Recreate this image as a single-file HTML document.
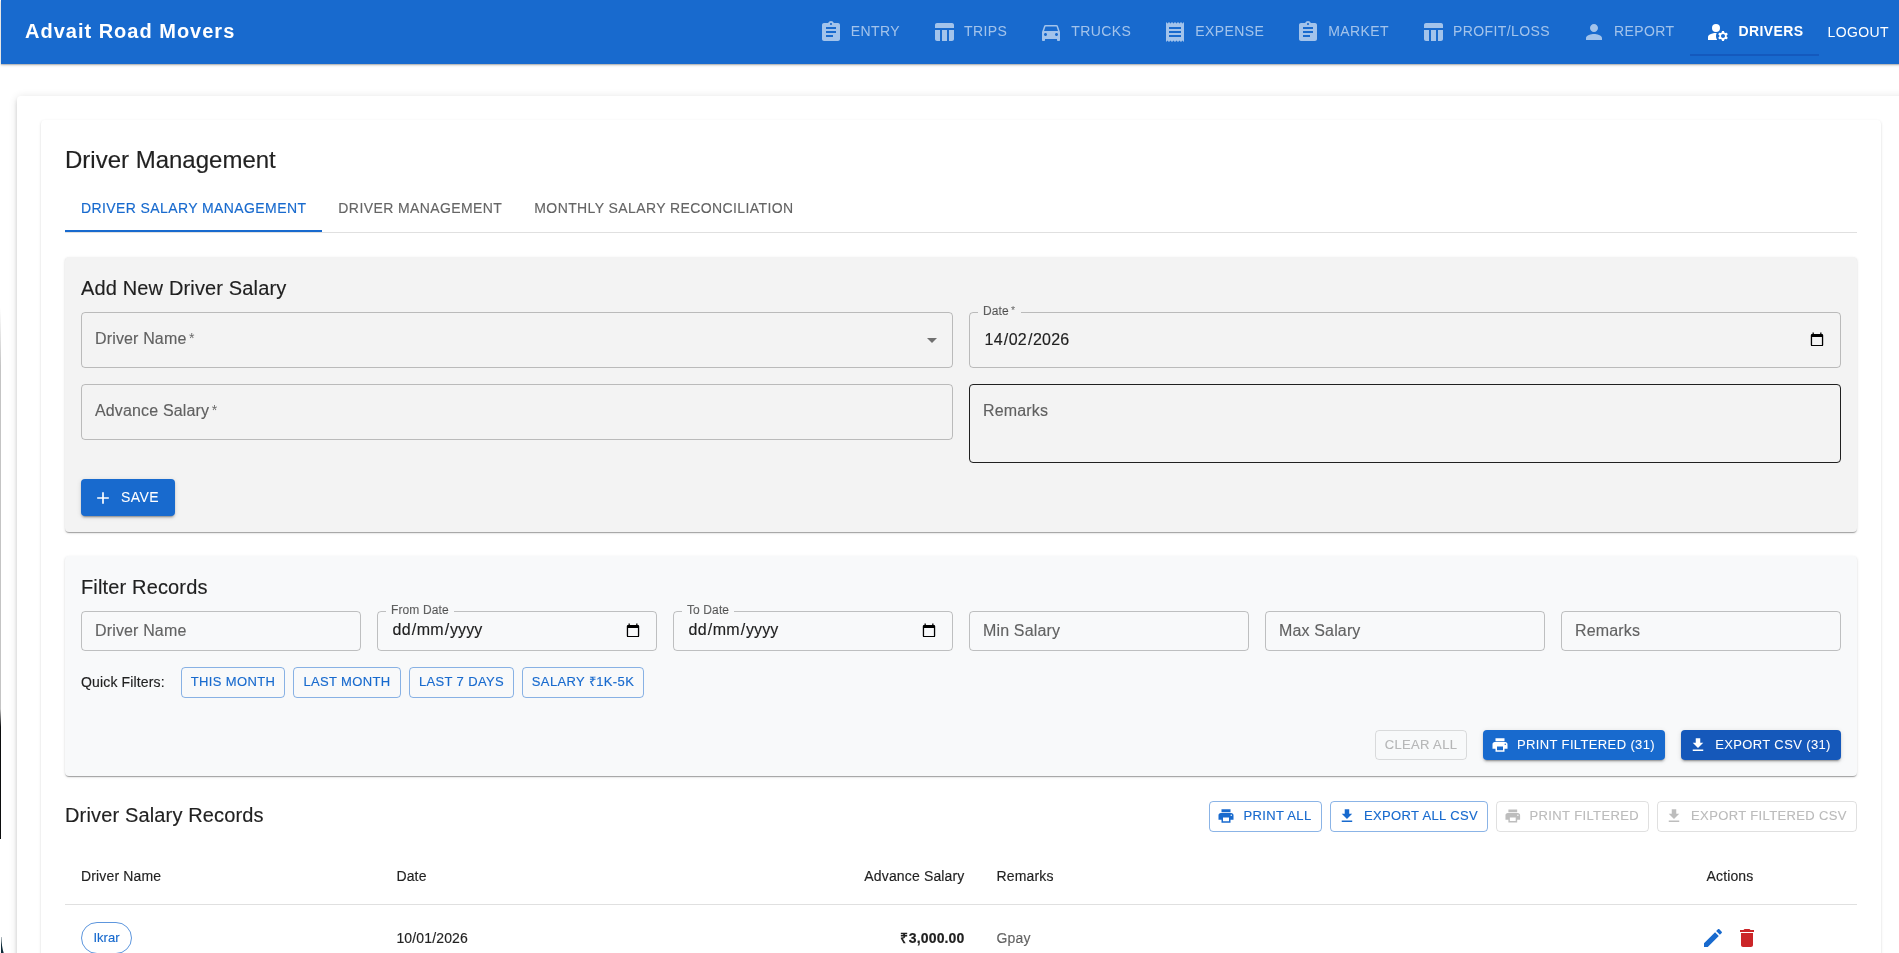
<!DOCTYPE html>
<html lang="en">
<head>
<meta charset="utf-8">
<title>Advait Road Movers</title>
<style>
*{box-sizing:border-box}
html,body{margin:0;padding:0}
body{width:1899px;height:953px;overflow:hidden;position:relative;background:#fff;font-family:"Liberation Sans",Arial,sans-serif;color:rgba(0,0,0,.87);-webkit-font-smoothing:antialiased;-webkit-text-stroke:.15px}
svg{display:block;fill:currentColor}
.abs{position:absolute}
#root{position:absolute;left:0;top:0;width:1899px;height:953px;will-change:transform}
/* app bar */
#appbar{position:absolute;left:1px;top:0;width:1900px;height:64px;background:#186ace;color:#fff;box-shadow:0 1px 1px rgba(0,0,0,.16),0 1px 3px rgba(0,0,0,.2)}
#brand{position:absolute;left:24px;top:-1px;height:64px;line-height:64px;font-size:20px;font-weight:700;letter-spacing:1px;white-space:nowrap;-webkit-text-stroke:0}
#nav{position:absolute;right:4px;top:0;height:64px;display:flex;align-items:center}
.nb{-webkit-text-stroke:0;display:flex;align-items:center;height:48px;padding:0 16px;font-size:14px;letter-spacing:.4px;color:rgba(255,255,255,.6);white-space:nowrap;position:relative}
.nb .t{position:relative;top:-1px}
.nb svg{width:24px;height:24px;margin-right:8px}
.nb.act{color:#fff;font-weight:700;-webkit-text-stroke:0}
.nb.act:after{content:"";position:absolute;left:0;right:0;top:46px;height:2px;background:#1459bd}
.nb.lo{color:#fff;padding:0 8px}
/* papers */
#outer{position:absolute;left:17px;top:96px;width:1900px;height:900px;background:#fff;border-radius:4px;box-shadow:0 3px 3px -2px rgba(0,0,0,.2),0 3px 4px 0 rgba(0,0,0,.14),0 1px 8px 0 rgba(0,0,0,.12)}
#inner{position:absolute;left:41px;top:120px;width:1840px;height:900px;background:#fff;border-radius:4px;box-shadow:0 2px 1px -1px rgba(0,0,0,.2),0 1px 1px 0 rgba(0,0,0,.14),0 1px 3px 0 rgba(0,0,0,.12)}
h5{position:absolute;left:65px;top:144px;margin:0;font-size:24px;line-height:32px;font-weight:400;white-space:nowrap}
#tabs{position:absolute;left:65px;top:184px;width:1792px;height:49px;border-bottom:1px solid rgba(0,0,0,.12);display:flex}
.tab{height:48px;padding:12px 16px;font-size:14px;line-height:24px;letter-spacing:.4px;color:rgba(0,0,0,.6);white-space:nowrap;position:relative}
.tab.sel{color:#186ace}
.tab.sel:after{content:"";position:absolute;left:0;right:0;bottom:0;height:2px;background:#186ace}
.paper{position:absolute;left:65px;width:1792px;border-radius:4px;box-shadow:0 2px 1px -1px rgba(0,0,0,.2),0 1px 1px 0 rgba(0,0,0,.14),0 1px 3px 0 rgba(0,0,0,.12)}
h6{position:absolute;margin:0;font-size:20px;line-height:32px;font-weight:400;letter-spacing:.15px;white-space:nowrap}
.fld{position:absolute;border:1px solid rgba(0,0,0,.23);border-radius:4px}
.fld .ph{position:absolute;left:13px;top:0;font-size:16px;letter-spacing:.15px;color:rgba(0,0,0,.6);white-space:nowrap}
.fld .val{position:absolute;left:13px;top:0;font-size:16px;letter-spacing:.15px;color:rgba(0,0,0,.87);white-space:nowrap}
.fld .seg{left:14.6px}
.fld .seg i{font-style:normal;margin:0 1px 0 .5px}
.fld .seg i:first-child{margin-left:0}
.ast{font-size:.88em;position:relative;top:-.09em;-webkit-text-stroke:0}
.fld .lbl{position:absolute;left:8px;top:-10px;padding:0 5px;font-size:12px;line-height:16px;letter-spacing:.11px;color:rgba(0,0,0,.6);white-space:nowrap}
.fld svg{position:absolute}
.btn{position:absolute;display:flex;align-items:center;justify-content:center;border-radius:4px;font-size:13px;letter-spacing:.37px;white-space:nowrap;height:30.75px;padding:0 9px}
.btn .t{position:relative;top:-1px}
.btn svg{width:18px;height:18px;margin-right:8px;margin-left:-2px}
.btn.out{border:1px solid rgba(24,106,206,.5);color:#186ace}
.btn.dis{border:1px solid rgba(0,0,0,.12);color:rgba(0,0,0,.26)}
.btn.con{-webkit-text-stroke:.05px;background:#186ace;color:#fff;box-shadow:0 3px 1px -2px rgba(0,0,0,.2),0 2px 2px 0 rgba(0,0,0,.14),0 1px 5px 0 rgba(0,0,0,.12)}
.th{position:absolute;top:864px;font-size:14px;line-height:24px;letter-spacing:.15px;white-space:nowrap}
.td{position:absolute;top:926px;font-size:14px;line-height:24px;letter-spacing:.15px;white-space:nowrap}
</style>
</head>
<body>
<div id="root">
<div id="outer"></div>
<div id="inner"></div>

<div id="appbar">
  <div id="brand">Advait Road Movers</div>
  <div id="nav">
    <div class="nb"><svg viewBox="0 0 24 24"><path d="M19 3h-4.180C14.400 1.840 13.300 1 12 1c-1.300 0-2.400.840-2.820 2H5c-1.100 0-2 .9-2 2v14c0 1.100.9 2 2 2h14c1.100 0 2-.9 2-2V5c0-1.100-.9-2-2-2zm-7 0c.550 0 1 .450 1 1s-.450 1-1 1-1-.450-1-1 .450-1 1-1zm2 14H7v-2h7v2zm3-4H7v-2h10v2zm0-4H7V7h10v2z"/></svg><span class="t">ENTRY</span></div>
    <div class="nb"><svg viewBox="0 0 24 24"><path d="M10 10.020h5V21h-5zM17 21h3c1.100 0 2-.9 2-2v-9h-5v11zm3-18H5c-1.100 0-2 .9-2 2v3h19V5c0-1.100-.9-2-2-2zM3 19c0 1.100.9 2 2 2h3V10H3v9z"/></svg><span class="t">TRIPS</span></div>
    <div class="nb"><svg viewBox="0 0 24 24"><path d="M18.920 6.010C18.720 5.420 18.160 5 17.500 5h-11c-.660 0-1.210.420-1.420 1.010L3 12v8c0 .550.450 1 1 1h1c.550 0 1-.450 1-1v-1h12v1c0 .550.450 1 1 1h1c.550 0 1-.450 1-1v-8l-2.080-5.990zM6.500 16c-.830 0-1.500-.670-1.500-1.500S5.670 13 6.500 13s1.500.670 1.500 1.500S7.330 16 6.500 16zm11 0c-.830 0-1.500-.670-1.500-1.500s.670-1.500 1.500-1.500 1.500.670 1.500 1.500-.670 1.500-1.500 1.500zM5 11l1.500-4.500h11L19 11H5z"/></svg><span class="t">TRUCKS</span></div>
    <div class="nb"><svg viewBox="0 0 24 24"><path d="M18 17H6v-2h12v2zm0-4H6v-2h12v2zm0-4H6V7h12v2zM3 22l1.500-1.500L6 22l1.500-1.500L9 22l1.500-1.500L12 22l1.500-1.500L15 22l1.500-1.500L18 22l1.500-1.500L21 22V2l-1.500 1.500L18 2l-1.500 1.500L15 2l-1.500 1.500L12 2l-1.500 1.500L9 2 7.500 3.500 6 2 4.500 3.500 3 2v20z"/></svg><span class="t">EXPENSE</span></div>
    <div class="nb"><svg viewBox="0 0 24 24"><path d="M19 3h-4.180C14.400 1.840 13.300 1 12 1c-1.300 0-2.400.840-2.820 2H5c-1.100 0-2 .9-2 2v14c0 1.100.9 2 2 2h14c1.100 0 2-.9 2-2V5c0-1.100-.9-2-2-2zm-7 0c.550 0 1 .450 1 1s-.450 1-1 1-1-.450-1-1 .450-1 1-1zm2 14H7v-2h7v2zm3-4H7v-2h10v2zm0-4H7V7h10v2z"/></svg><span class="t">MARKET</span></div>
    <div class="nb"><svg viewBox="0 0 24 24"><path d="M10 10.020h5V21h-5zM17 21h3c1.100 0 2-.9 2-2v-9h-5v11zm3-18H5c-1.100 0-2 .9-2 2v3h19V5c0-1.100-.9-2-2-2zM3 19c0 1.100.9 2 2 2h3V10H3v9z"/></svg><span class="t">PROFIT/LOSS</span></div>
    <div class="nb"><svg viewBox="0 0 24 24"><path d="M12 12c2.210 0 4-1.790 4-4s-1.790-4-4-4-4 1.790-4 4 1.790 4 4 4zm0 2c-2.670 0-8 1.340-8 4v2h16v-2c0-2.660-5.330-4-8-4z"/></svg><span class="t">REPORT</span></div>
    <div class="nb act"><svg viewBox="0 0 24 24"><circle cx="10" cy="8" r="4"/><path d="M10.670 13.020c-.220-.010-.440-.020-.670-.020-2.420 0-4.680.670-6.610 1.820-.880.520-1.390 1.500-1.390 2.530V20h9.260c-.790-1.130-1.260-2.510-1.260-4 0-1.070.250-2.070.670-2.980zM20.750 16c0-.220-.030-.420-.060-.630l1.140-1.010-1-1.730-1.450.490c-.320-.270-.680-.480-1.080-.630L18 11h-2l-.3 1.490c-.4.150-.760.360-1.080.630l-1.450-.490-1 1.730 1.140 1.010c-.030.210-.060.410-.060.630s.030.420.060.630l-1.140 1.010 1 1.730 1.450-.490c.320.270.680.480 1.080.630L16 21h2l.3-1.490c.4-.15.760-.360 1.080-.630l1.450.490 1-1.730-1.140-1.010c.030-.210.060-.410.060-.630zM17 18c-1.100 0-2-.9-2-2s.9-2 2-2 2 .9 2 2-.9 2-2 2z"/></svg><span class="t">DRIVERS</span></div>
    <div class="nb lo"><span class="t" style="top:0">LOGOUT</span></div>
  </div>
</div>

<h5>Driver Management</h5>
<div id="tabs">
  <div class="tab sel">DRIVER SALARY MANAGEMENT</div>
  <div class="tab">DRIVER MANAGEMENT</div>
  <div class="tab">MONTHLY SALARY RECONCILIATION</div>
</div>

<!-- Add new driver salary -->
<div class="paper" style="top:257px;height:275px;background:#f3f3f3"></div>
<h6 style="left:81px;top:272px">Add New Driver Salary</h6>
<div class="fld" style="left:81px;top:312px;width:872px;height:56px"><span class="ph" style="line-height:52px">Driver Name<span class="ast" style="margin-left:2.5px">*</span></span>
  <svg viewBox="0 0 24 24" style="right:8px;top:15px;width:24px;height:24px;color:rgba(0,0,0,.54)"><path d="M7 10l5 5 5-5z"/></svg></div>
<div class="fld" style="left:969px;top:312px;width:872px;height:56px"><span class="lbl" style="background:#f3f3f3">Date<span class="ast" style="margin-left:2.2px;margin-right:.6px">*</span></span><span class="val seg" style="line-height:54px"><i>14</i>/<i>02</i>/<i>2026</i></span>
  <svg viewBox="0 0 14 15" style="right:16px;top:19px;width:14px;height:15px;color:#000"><path fill-rule="evenodd" d="M2 2h10a1.200 1.200 0 0 1 1.200 1.200v9.700a1.200 1.200 0 0 1-1.200 1.200H2a1.200 1.200 0 0 1-1.200-1.200V3.200A1.200 1.200 0 0 1 2 2zM2.100 5.100v7.900h9.800V5.100z"/><rect x="2.400" y=".5" width="1.600" height="2" opacity=".8"/><rect x="10" y=".5" width="1.600" height="2" opacity=".8"/></svg></div>
<div class="fld" style="left:81px;top:384px;width:872px;height:56px"><span class="ph" style="line-height:52px">Advance Salary<span class="ast" style="margin-left:2.5px">*</span></span></div>
<div class="fld" style="left:969px;top:384px;width:872px;height:79px;border-color:rgba(0,0,0,.87)"><span class="ph" style="line-height:52px">Remarks</span></div>
<div class="btn con" style="left:81px;top:479px;width:94px;height:36.5px;font-size:14px;letter-spacing:.4px;padding:0"><svg viewBox="0 0 24 24" style="width:20px;height:20px;margin-left:-4px;position:relative;top:.75px"><path d="M19 13h-6v6h-2v-6H5v-2h6V5h2v6h6v2z"/></svg><span class="t" style="top:0">SAVE</span></div>

<!-- Filter records -->
<div class="paper" style="top:556px;height:220px;background:#f8f9fa"></div>
<h6 style="left:81px;top:571px">Filter Records</h6>
<div class="fld" style="left:81px;top:611px;width:280px;height:40px"><span class="ph" style="line-height:38px">Driver Name</span></div>
<div class="fld" style="left:377px;top:611px;width:280px;height:40px"><span class="lbl" style="background:#f8f9fa">From Date</span><span class="val seg" style="line-height:36px"><i>dd</i>/<i>mm</i>/<i>yyyy</i></span>
  <svg viewBox="0 0 14 15" style="right:16px;top:11px;width:14px;height:15px;color:#000"><path fill-rule="evenodd" d="M2 2h10a1.200 1.200 0 0 1 1.200 1.200v9.700a1.200 1.200 0 0 1-1.200 1.200H2a1.200 1.200 0 0 1-1.200-1.200V3.200A1.200 1.200 0 0 1 2 2zM2.100 5.100v7.900h9.800V5.100z"/><rect x="2.400" y=".5" width="1.600" height="2" opacity=".8"/><rect x="10" y=".5" width="1.600" height="2" opacity=".8"/></svg></div>
<div class="fld" style="left:673px;top:611px;width:280px;height:40px"><span class="lbl" style="background:#f8f9fa">To Date</span><span class="val seg" style="line-height:36px"><i>dd</i>/<i>mm</i>/<i>yyyy</i></span>
  <svg viewBox="0 0 14 15" style="right:16px;top:11px;width:14px;height:15px;color:#000"><path fill-rule="evenodd" d="M2 2h10a1.200 1.200 0 0 1 1.200 1.200v9.700a1.200 1.200 0 0 1-1.200 1.200H2a1.200 1.200 0 0 1-1.200-1.200V3.200A1.200 1.200 0 0 1 2 2zM2.100 5.100v7.900h9.800V5.100z"/><rect x="2.400" y=".5" width="1.600" height="2" opacity=".8"/><rect x="10" y=".5" width="1.600" height="2" opacity=".8"/></svg></div>
<div class="fld" style="left:969px;top:611px;width:280px;height:40px"><span class="ph" style="line-height:38px">Min Salary</span></div>
<div class="fld" style="left:1265px;top:611px;width:280px;height:40px"><span class="ph" style="line-height:38px">Max Salary</span></div>
<div class="fld" style="left:1561px;top:611px;width:280px;height:40px"><span class="ph" style="line-height:38px">Remarks</span></div>

<div class="abs" style="left:81px;top:672px;font-size:14px;line-height:20px;letter-spacing:.15px;white-space:nowrap">Quick Filters:</div>
<div class="btn out" style="left:181px;top:667px;width:104px"><span class="t">THIS MONTH</span></div>
<div class="btn out" style="left:293px;top:667px;width:108px"><span class="t">LAST MONTH</span></div>
<div class="btn out" style="left:409px;top:667px;width:105px"><span class="t">LAST 7 DAYS</span></div>
<div class="btn out" style="left:522px;top:667px;width:122px"><span class="t">SALARY ₹1K-5K</span></div>

<div class="btn dis" style="left:1375px;top:730px;width:92px;height:30px"><span class="t">CLEAR ALL</span></div>
<div class="btn con" style="left:1483px;top:730px;width:182px;height:30px"><svg viewBox="0 0 24 24"><path d="M19 8H5c-1.660 0-3 1.340-3 3v6h4v4h12v-4h4v-6c0-1.660-1.340-3-3-3zm-3 11H8v-5h8v5zm3-7c-.550 0-1-.450-1-1s.450-1 1-1 1 .450 1 1-.450 1-1 1zm-1-9H6v4h12V3z"/></svg><span class="t">PRINT FILTERED (31)</span></div>
<div class="btn con" style="left:1681px;top:730px;width:160px;height:30px;background:#1558ba"><svg viewBox="0 0 24 24"><path d="M19 9h-4V3H9v6H5l7 7 7-7zM5 18v2h14v-2H5z"/></svg><span class="t">EXPORT CSV (31)</span></div>

<!-- Records -->
<h6 style="left:65px;top:799px">Driver Salary Records</h6>
<div class="btn out" style="left:1209px;top:801px;width:113px"><svg viewBox="0 0 24 24"><path d="M19 8H5c-1.660 0-3 1.340-3 3v6h4v4h12v-4h4v-6c0-1.660-1.340-3-3-3zm-3 11H8v-5h8v5zm3-7c-.550 0-1-.450-1-1s.450-1 1-1 1 .450 1 1-.450 1-1 1zm-1-9H6v4h12V3z"/></svg><span class="t">PRINT ALL</span></div>
<div class="btn out" style="left:1330px;top:801px;width:158px"><svg viewBox="0 0 24 24"><path d="M19 9h-4V3H9v6H5l7 7 7-7zM5 18v2h14v-2H5z"/></svg><span class="t">EXPORT ALL CSV</span></div>
<div class="btn dis" style="left:1496px;top:801px;width:153px"><svg viewBox="0 0 24 24"><path d="M19 8H5c-1.660 0-3 1.340-3 3v6h4v4h12v-4h4v-6c0-1.660-1.340-3-3-3zm-3 11H8v-5h8v5zm3-7c-.550 0-1-.450-1-1s.450-1 1-1 1 .450 1 1-.450 1-1 1zm-1-9H6v4h12V3z"/></svg><span class="t">PRINT FILTERED</span></div>
<div class="btn dis" style="left:1657px;top:801px;width:200px"><svg viewBox="0 0 24 24"><path d="M19 9h-4V3H9v6H5l7 7 7-7zM5 18v2h14v-2H5z"/></svg><span class="t">EXPORT FILTERED CSV</span></div>

<div class="th" style="left:81px">Driver Name</div>
<div class="th" style="left:396.4px">Date</div>
<div class="th" style="right:934.5px">Advance Salary</div>
<div class="th" style="left:996.5px">Remarks</div>
<div class="th" style="left:1706.5px">Actions</div>
<div class="abs" style="left:65px;top:904px;width:1792px;height:1px;background:rgba(224,224,224,1)"></div>

<div class="abs" style="left:81px;top:922px;width:51px;height:32px;border:1px solid rgba(24,106,206,.7);border-radius:16px;color:#186ace;font-size:13px;line-height:30px;text-align:center">Ikrar</div>
<div class="td" style="left:396.4px">10/01/2026</div>
<div class="td" style="right:934.5px;font-weight:700;-webkit-text-stroke:.2px"><span style="margin-right:.4px;-webkit-text-stroke:0">₹</span>3,000.00</div>
<div class="td" style="left:996.5px;color:rgba(0,0,0,.6)">Gpay</div>
<svg class="abs" viewBox="0 0 24 24" style="left:1701px;top:926px;width:24px;height:24px;color:#186ace"><path d="M3 17.250V21h3.750L17.810 9.940l-3.750-3.750L3 17.250zM20.710 7.040c.390-.390.390-1.020 0-1.410l-2.340-2.340c-.390-.390-1.020-.390-1.410 0l-1.830 1.830 3.750 3.750 1.830-1.830z"/></svg>
<svg class="abs" viewBox="0 0 24 24" style="left:1735px;top:926px;width:24px;height:24px;color:#cb2528"><path d="M6 19c0 1.100.9 2 2 2h8c1.100 0 2-.9 2-2V7H6v12zM19 4h-3.500l-1-1h-5l-1 1H5v2h14V4z"/></svg>

<!-- edge artefacts -->
<div class="abs" style="left:0;top:308px;width:1px;height:58px;background:linear-gradient(rgba(196,196,196,0),#c4c4c4)"></div>
<div class="abs" style="left:0;top:366px;width:1px;height:343px;background:#c4c4c4"></div>
<div class="abs" style="left:0;top:709px;width:1px;height:18px;background:linear-gradient(#c4c4c4,#0c0d0e)"></div>
<div class="abs" style="left:0;top:727px;width:1px;height:112px;background:#0c0d0e"></div>
<svg class="abs" viewBox="0 0 6 20" style="left:0;top:933px;width:6px;height:20px"><path d="M1 4 L1.300 4 Q1.700 14 3.700 20 L1 20Z" fill="#0e2a38"/></svg>
</div>
</body>
</html>
